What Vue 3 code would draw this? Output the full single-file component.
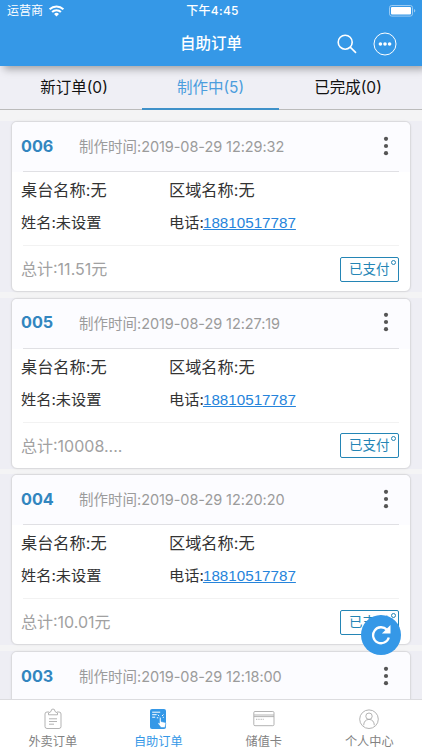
<script setup>
import { ref } from 'vue'

const activeTab = ref('making')
const activeNav = ref('self')

const tabs = [
  { label: '新订单', value: 'new', count: 0 },
  { label: '制作中', value: 'making', count: 5 },
  { label: '已完成', value: 'done', count: 0 },
]

const navItems = [
  { label: '外卖订单', value: 'takeout' },
  { label: '自助订单', value: 'self' },
  { label: '储值卡', value: 'card' },
  { label: '个人中心', value: 'mine' },
]

const orders = ref([
  { no: '006', time: '2019-08-29 12:29:32', total: '11.51元' },
  { no: '005', time: '2019-08-29 12:27:19', total: '10008....' },
  { no: '004', time: '2019-08-29 12:20:20', total: '10.01元' },
  { no: '003', time: '2019-08-29 12:18:00', total: '' },
])
</script>

<template>
  <div class="page">
    <header class="header">
      <div class="status-bar">
        <div class="carrier">
          <span>运营商</span>
          <svg class="wifi" viewBox="0 0 14 11">
            <path d="M.6 4a9 9 0 0 1 12.8 0M2.9 6.500a5.800 5.800 0 0 1 8.200 0" />
            <path class="dot" d="M4.700 8.400a3.200 3.200 0 0 1 4.600 0L7 10.700z" />
          </svg>
        </div>
        <span class="clock">下午4:45</span>
        <svg class="battery" viewBox="0 0 27 12">
          <rect class="shell" x=".5" y=".5" width="23" height="10.6" rx="2.2" />
          <rect class="level" x="2" y="2" width="20" height="7.6" rx="1" />
          <path class="tip" d="M25 4v3.6q1.3-.6 1.3-1.8T25 4z" />
        </svg>
      </div>
      <div class="nav-bar">
        <span></span>
        <h1>自助订单</h1>
        <div class="actions">
          <svg class="search" viewBox="0 0 20 20">
            <circle cx="8.2" cy="8.2" r="7" />
            <path d="M13.2 13.2l5.8 5.6" />
          </svg>
          <svg class="more" viewBox="0 0 24 24">
            <circle class="ring" cx="12" cy="12" r="11" />
            <circle cx="7.4" cy="12" r="1.8" />
            <circle cx="12" cy="12" r="1.8" />
            <circle cx="16.6" cy="12" r="1.8" />
          </svg>
        </div>
      </div>
    </header>

    <div class="tabs">
      <button
        v-for="tab in tabs"
        :key="tab.value"
        class="tab"
        :class="{ active: activeTab === tab.value }"
        @click="activeTab = tab.value"
      >
        {{ tab.label }}<span class="count">({{ tab.count }})</span>
      </button>
    </div>

    <main class="list">
      <div v-for="order in orders" :key="order.no" class="slot">
        <article class="order">
          <div class="order-head">
            <strong>{{ order.no }}</strong>
            <span class="time">制作时间:<span class="time-value">{{ order.time }}</span></span>
            <svg class="menu" viewBox="0 0 6 20">
              <circle cx="3" cy="2.800" r="2.1" />
              <circle cx="3" cy="10" r="2.1" />
              <circle cx="3" cy="17.200" r="2.1" />
            </svg>
          </div>
          <template v-if="order.total">
            <div class="order-body">
              <div class="row seat">
                <span>桌台名称:无</span>
                <span>区域名称:无</span>
              </div>
              <div class="row contact">
                <span>姓名:未设置</span>
                <span>电话:<a href="tel:18810517787">18810517787</a></span>
              </div>
            </div>
            <div class="order-foot">
              <span class="total">总计:{{ order.total }}</span>
              <span class="paid">已支付<i></i></span>
            </div>
          </template>
        </article>
      </div>
    </main>

    <button class="refresh" aria-label="刷新">
      <svg viewBox="0 0 20 20">
        <path d="M15.8 4.6A8 8 0 1 0 17.8 12.500" />
        <path class="arrow" d="M19.5 0v8.6h-8.6z" />
      </svg>
    </button>

    <nav class="bottom-nav">
      <button
        v-for="item in navItems"
        :key="item.value"
        :class="{ active: activeNav === item.value }"
        @click="activeNav = item.value"
      >
        <svg v-if="item.value === 'takeout'" viewBox="0 0 22 22">
          <path d="M7 4H5A2 2 0 0 0 3 6V18.500A2 2 0 0 0 5 20.500H17A2 2 0 0 0 19 18.500V6A2 2 0 0 0 17 4H15" />
          <path d="M6.500 6.800V5L9 3.500Q9 1 11 1T13 3.500L15.500 5V6.800zM7 10.800h8M7 13.500h8M7 16.200h5" />
        </svg>
        <svg v-else-if="item.value === 'self'" class="filled" viewBox="0 0 22 22">
          <rect x="3" y="1" width="16" height="20" rx="2" />
          <path class="line" d="M5.200 4.200h8M5.200 6.700h4.500M5.200 9.200h3M10.800 6.800l1.400 1.200M16.500 6.500L15 8M9.800 9.800h1.500M15.800 9.300h1" />
          <path class="hand" d="M12.500 9.500q1-.7 1.500.5v3.500l4.300 1q.7.300.5 1.200l-.8 3.800h-4l-3-4q.2-1.200 1.500-.3z" />
        </svg>
        <svg v-else-if="item.value === 'card'" viewBox="0 0 22 22">
          <rect x=".8" y="3.500" width="20.200" height="14.200" rx="1.200" />
          <path d="M1 7h20M1 8.600h20" />
          <path class="dots" d="M3 11.300h8" />
        </svg>
        <svg v-else viewBox="0 0 22 22">
          <circle cx="11" cy="11.200" r="9.300" />
          <circle cx="11" cy="8.200" r="3.200" />
          <path d="M5.700 17.300c0-3.500 2-5.900 5.300-5.900s5.300 2.400 5.300 5.900" />
        </svg>
        <span>{{ item.label }}</span>
      </button>
    </nav>
  </div>
</template>

<style>
body {
  margin: 0;
  overflow: hidden;
}
</style>

<style scoped>
.page {
  position: relative;
  display: flex;
  flex-direction: column;
  height: 750px;
  overflow: hidden;
  background: #f4f4f5;
  color: #333;
  font-family: Inter, "Noto Sans CJK SC", sans-serif;
  font-weight: 400;
}

button {
  padding: 0;
  border: 0;
  background: none;
  font: inherit;
}

svg {
  display: block;
  flex: none;
}

.header {
  position: relative;
  z-index: 1;
  flex: none;
  height: 66px;
  background: #3598e7;
  box-shadow: 4px 3px 8px rgba(0, 0, 0, 0.34);
  color: #fff;
}

.status-bar {
  display: grid;
  grid-template-columns: 1fr auto 1fr;
  align-items: center;
  height: 21px;
  padding: 0 6px 0 7px;
  font-size: 12px;
  line-height: 21px;
}

.carrier {
  display: flex;
  align-items: center;
  gap: 6px;
}

.wifi {
  width: 15px;
  height: 12px;
  fill: none;
  stroke: #fff;
  stroke-width: 1.9;
}

.wifi .dot {
  fill: #fff;
  stroke: none;
}

.clock {
  padding-left: 2px;
  font-weight: 500;
  letter-spacing: 0.3px;
}

.battery {
  justify-self: end;
  width: 27px;
  height: 12px;
  fill: #fff;
}

.battery .shell {
  fill: none;
  stroke: #9acbf3;
}

.battery .tip {
  fill: #9acbf3;
}

.nav-bar {
  display: grid;
  grid-template-columns: 1fr auto 1fr;
  align-items: center;
  height: 45px;
}

.nav-bar h1 {
  margin: 0;
  padding-top: 1px;
  font-size: 15.5px;
  font-weight: 500;
  line-height: 24px;
}

.actions {
  display: flex;
  align-items: center;
  justify-content: flex-end;
  gap: 16px;
  padding-right: 25px;
}

.search {
  width: 20px;
  height: 20px;
  fill: none;
  stroke: #fff;
  stroke-width: 1.6;
}

.more {
  width: 24px;
  height: 24px;
  fill: #fff;
}

.more .ring {
  fill: none;
  stroke: #fff;
}

.tabs {
  display: grid;
  flex: none;
  grid-template-columns: 142px 137px 1fr;
  height: 44px;
  background: #efeff5;
}

.tab {
  padding-left: 6px;
  border-bottom: 1px solid #bbb;
  color: #111;
  font-size: 15.5px;
  line-height: 43px;
}

.tab:last-child {
  padding: 0 5px 0 0;
}

.tab.active {
  padding: 1px 0 0;
  border-bottom: 2px solid #3f91c9;
  color: #4b9ddd;
  line-height: 41px;
}

.list {
  display: flex;
  flex: 1;
  flex-direction: column;
  gap: 5.7px;
  min-height: 0;
  padding-top: 11px;
  overflow: hidden;
}

.slot {
  flex: none;
  padding: 0 11px;
  background: #eeeef4;
}

.order {
  box-sizing: border-box;
  height: 171px;
  overflow: hidden;
  border: 1px solid #dbdbde;
  border-radius: 6px;
  background: #fff;
  box-shadow: 0 0 2px rgba(0, 0, 0, 0.08);
}

.order-head {
  box-sizing: border-box;
  display: flex;
  align-items: center;
  height: 50px;
  padding: 0 21px 3px 9px;
  background: linear-gradient(#e0e0e4, #e0e0e4) 11px 100% / 376px 1px no-repeat #fcfcff;
}

.order-head strong {
  width: 58px;
  color: #3286bf;
  font-size: 16.2px;
  font-weight: 700;
}

.time {
  flex: 1;
  color: #9b9b9b;
  font-size: 14.5px;
  white-space: nowrap;
}

.time-value {
  letter-spacing: -0.08px;
}

.menu {
  width: 6px;
  height: 20px;
  fill: #555;
}

.order-body {
  box-sizing: border-box;
  height: 74px;
  padding: 2px 9px 0;
  background: linear-gradient(#f2f2f2, #f2f2f2) 11px 100% / 376px 1px no-repeat;
}

.row {
  display: grid;
  grid-template-columns: 148px 1fr;
  height: 33px;
  line-height: 32px;
  white-space: nowrap;
}

.seat {
  font-size: 16.2px;
}

.contact {
  font-size: 15.2px;
}

.contact a {
  margin-left: -0.8px;
  color: #2684db;
  font-family: "Liberation Sans", sans-serif;
  font-size: 15.2px;
  text-decoration: underline;
}

.order-foot {
  display: flex;
  align-items: center;
  justify-content: space-between;
  height: 46px;
  padding: 0 11px 0 9px;
}

.total {
  padding-bottom: 2px;
  color: #a1a1a1;
  font-size: 16px;
}

.paid {
  position: relative;
  box-sizing: border-box;
  width: 59px;
  height: 25px;
  padding-left: 8px;
  border: 1px solid #2485b5;
  border-radius: 2px;
  color: #2485b5;
  font-size: 13.5px;
  line-height: 23px;
}

.paid i {
  position: absolute;
  top: 2px;
  right: 2px;
  box-sizing: border-box;
  width: 5px;
  height: 5px;
  border: 1px solid #2485b5;
  border-radius: 50%;
}

.refresh {
  position: absolute;
  right: 21px;
  bottom: 95px;
  z-index: 1;
  display: grid;
  place-items: center;
  width: 40px;
  height: 40px;
  border-radius: 50%;
  background: #3598e7;
}

.refresh svg {
  width: 20px;
  height: 20px;
  fill: none;
  stroke: #fff;
  stroke-width: 2.3;
}

.refresh .arrow {
  fill: #fff;
  stroke: none;
}

.bottom-nav {
  position: relative;
  display: grid;
  flex: none;
  grid-template-columns: repeat(4, 1fr);
  box-sizing: border-box;
  height: 51px;
  border-top: 1px solid #dcdcdf;
  background: #fff;
}

.bottom-nav button {
  display: flex;
  flex-direction: column;
  align-items: center;
  gap: 3px;
  padding-top: 8px;
  color: #828282;
  font-size: 12.2px;
  line-height: 17px;
}

.bottom-nav .active {
  color: #3598e7;
}

.bottom-nav svg {
  width: 22px;
  height: 22px;
  fill: none;
  stroke: #aaa;
  stroke-width: 0.9;
}

.bottom-nav .filled {
  fill: #3598e7;
  stroke: none;
}

.filled .line {
  fill: none;
  stroke: #fff;
  stroke-width: 1;
}

.filled .hand {
  fill: #fff;
  stroke: #3598e7;
  stroke-width: 0.5;
}

.bottom-nav .dots {
  stroke-dasharray: 1 0.7;
}
</style>
